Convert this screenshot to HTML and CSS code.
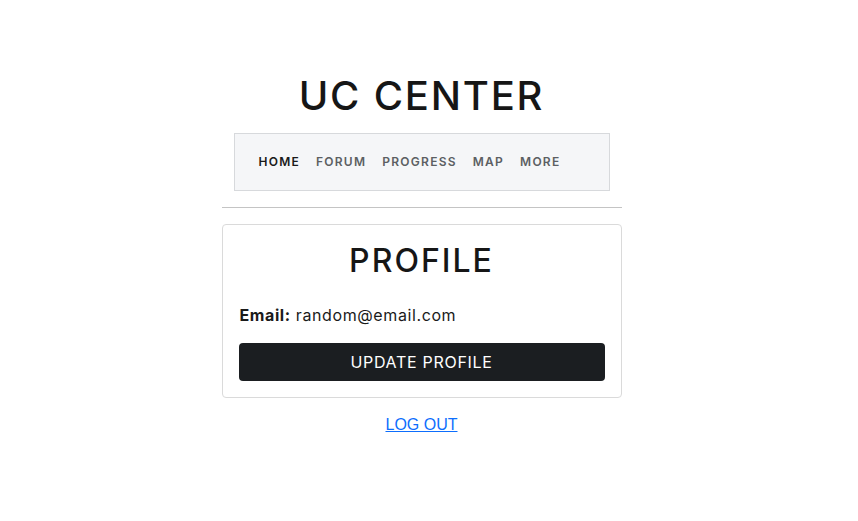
FILE: index.html
```html
<!DOCTYPE html>
<html>
<head>
<meta charset="utf-8">
<link rel="stylesheet" href="styles.css">
</head>
<body>
<div class="page">
  <div class="container">
    <h1 class="site-title">UC CENTER</h1>
    <nav class="nav">
      <a class="nav-link active">HOME</a>
      <a class="nav-link">FORUM</a>
      <a class="nav-link">PROGRESS</a>
      <a class="nav-link">MAP</a>
      <a class="nav-link">MORE</a>
    </nav>
    <hr class="divider">
    <div class="card">
      <h2 class="card-title">PROFILE</h2>
      <p class="email"><strong>Email:</strong> random@email.com</p>
      <button class="btn">UPDATE PROFILE</button>
    </div>
    <div class="logout-row"><a class="logout" href="#">LOG OUT</a></div>
  </div>
</div>
</body>
</html>
```

FILE: styles.css
```css
* { box-sizing: border-box; }
html, body { margin: 0; padding: 0; background: #fff; }
body { font-family: Inter, "Noto Sans", sans-serif; color: #1a1a1a; }
.page { width: 843px; display: flex; justify-content: center; padding-top: 72px; }
.container { width: 400px; display: flex; flex-direction: column; align-items: center; }
.site-title { margin: 0; font-size: 40px; font-weight: 500; letter-spacing: 1.8px; line-height: 48px; color: #161616; }
.nav { margin-top: 13px; width: 376px; height: 58px; background: #f5f6f8; border: 1px solid #d7d9dc; display: flex; align-items: center; padding-left: 24px; padding-bottom: 1px; gap: 16px; }
.nav-link { font-size: 12px; font-weight: 600; letter-spacing: 1.25px; color: #5c5f63; text-decoration: none; }
.nav-link.active { color: #1a1a1a; }
.divider { width: 400px; margin: 16px 0 0; border: 0; border-top: 1px solid #c4c4c4; height: 0; }
.card { margin-top: 16px; width: 400px; border: 1px solid #dadada; border-radius: 4px; padding: 16px; display: flex; flex-direction: column; align-items: stretch; }
.card-title { margin: 0; text-align: center; font-size: 32px; font-weight: 500; letter-spacing: 2px; line-height: 40px; color: #161616; }
.email { margin: 24px 0 0 1px; font-size: 16px; letter-spacing: 0.6px; line-height: 20px; color: #1a1a1a; }
.email strong { font-weight: 700; }
.btn { margin-top: 18px; height: 38px; border: 0; border-radius: 4px; background: #1b1e21; color: #fff; font-family: Inter, sans-serif; font-size: 16px; letter-spacing: 0.7px; cursor: pointer; }
.logout-row { margin-top: 16px; }
.logout { font-family: "Liberation Sans", Arial, sans-serif; font-size: 16px; line-height: 18px; color: #0d6efd; text-decoration: underline; }
```
